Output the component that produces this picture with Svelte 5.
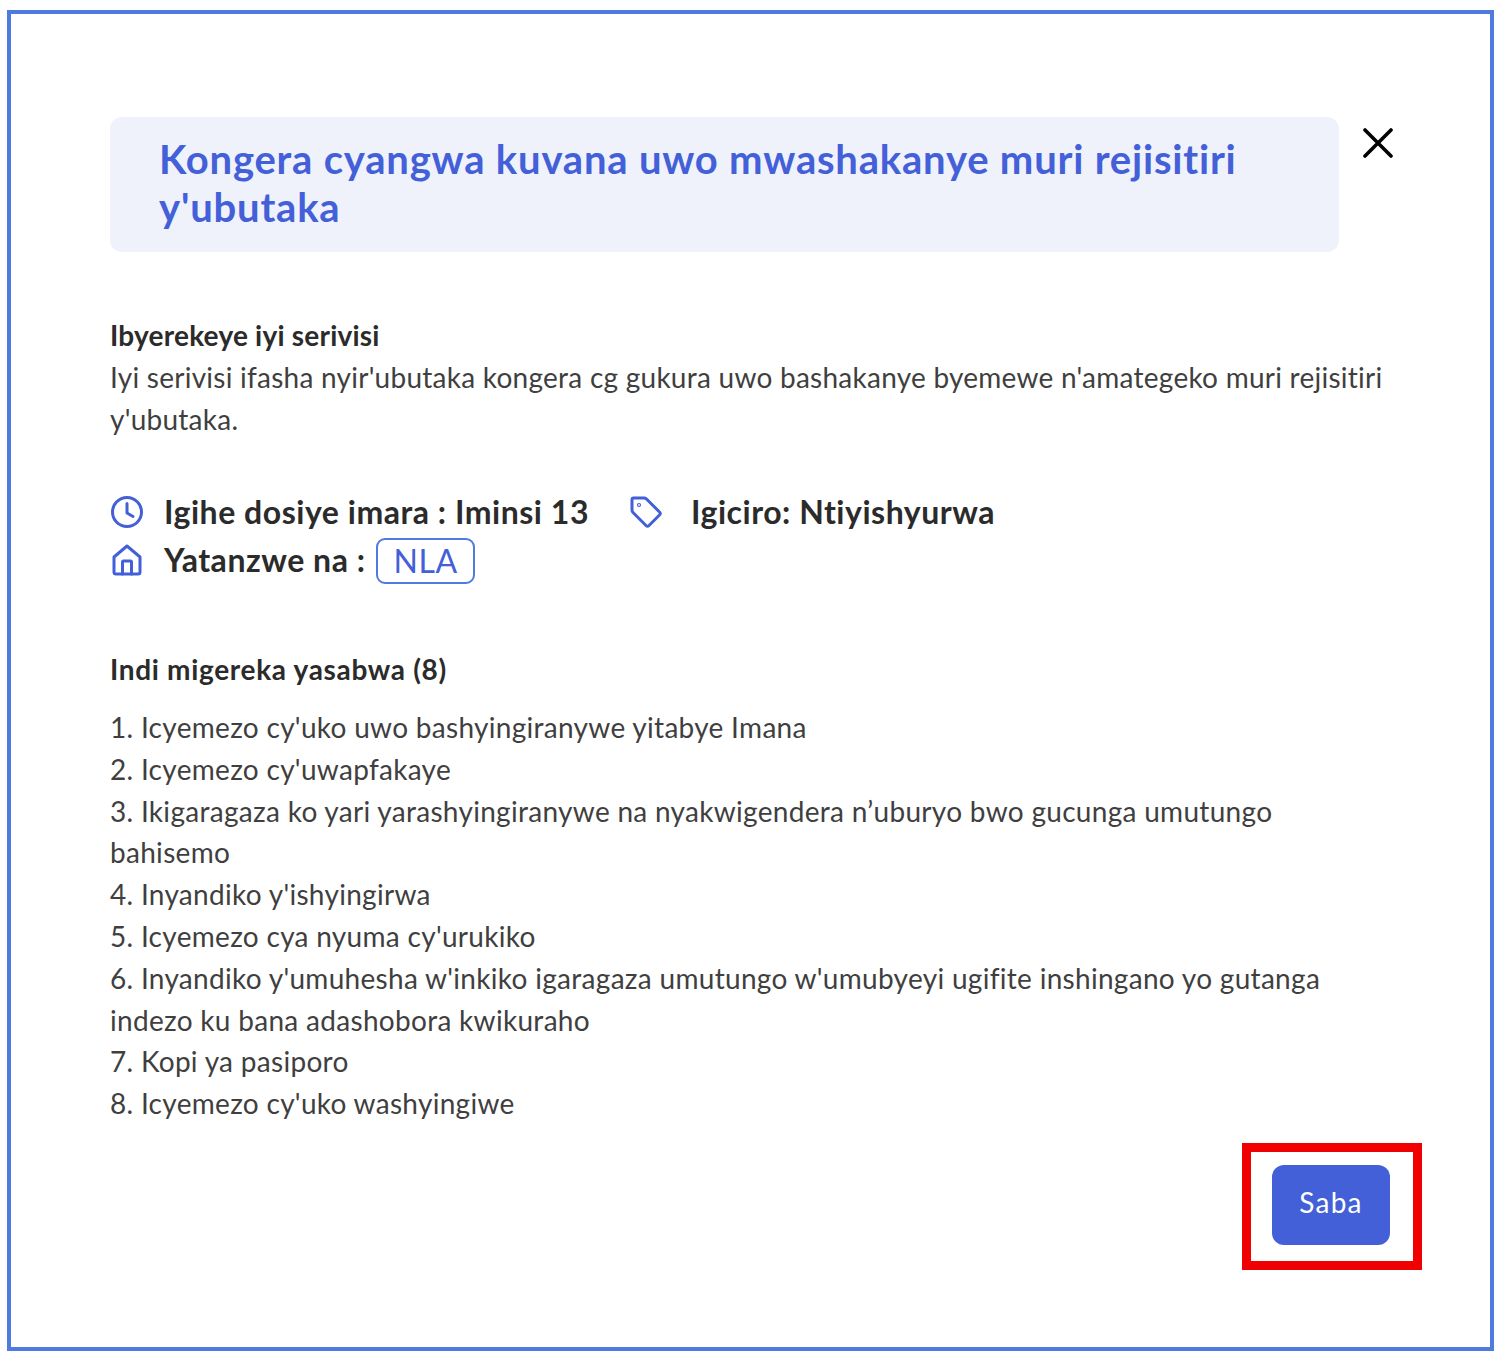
<script>
	const requirements = [
		"1. Icyemezo cy'uko uwo bashyingiranywe yitabye Imana",
		"2. Icyemezo cy'uwapfakaye",
		"3. Ikigaragaza ko yari yarashyingiranywe na nyakwigendera n’uburyo bwo gucunga umutungo bahisemo",
		"4. Inyandiko y'ishyingirwa",
		"5. Icyemezo cya nyuma cy'urukiko",
		"6. Inyandiko y'umuhesha w'inkiko igaragaza umutungo w'umubyeyi ugifite inshingano yo gutanga indezo ku bana adashobora kwikuraho",
		"7. Kopi ya pasiporo",
		"8. Icyemezo cy'uko washyingiwe"
	];
</script>

<div class="frame">
	<header class="top">
		<h1>Kongera cyangwa kuvana uwo mwashakanye muri rejisitiri y'ubutaka</h1>
		<button class="close" aria-label="Close">
			<svg width="30" height="30" viewBox="0 0 30 30" fill="none" stroke="#000" stroke-width="3.6" stroke-linecap="round">
				<path d="M2 2 L28 28 M28 2 L2 28" />
			</svg>
		</button>
	</header>

	<section class="about">
		<h2>Ibyerekeye iyi serivisi</h2>
		<p>Iyi serivisi ifasha nyir'ubutaka kongera cg gukura uwo bashakanye byemewe n'amategeko muri rejisitiri y'ubutaka.</p>
	</section>

	<section class="meta">
		<div class="meta-row">
			<span class="meta-item">
				<svg class="icon" width="34" height="34" viewBox="0 0 34 34" fill="none" stroke="#4360d8" stroke-width="3" stroke-linecap="round" stroke-linejoin="round">
					<circle cx="17" cy="17" r="14.5" />
					<path d="M17 8.5 V18 L23 21.5" />
				</svg>
				<span>Igihe dosiye imara : Iminsi 13</span>
			</span>
			<span class="meta-item price">
				<svg class="icon" width="34" height="34" viewBox="0 0 34 34" fill="none" stroke="#4360d8" stroke-width="3" stroke-linecap="round" stroke-linejoin="round">
					<path d="M3 4.5 Q3 3 4.5 3 H15 Q16.5 3 17.5 4 L30.5 17 Q32 18.5 30.5 20 L20 30.5 Q18.5 32 17 30.5 L4 17.5 Q3 16.5 3 15 Z" />
					<circle cx="10" cy="10" r="0.6" />
				</svg>
				<span>Igiciro: Ntiyishyurwa</span>
			</span>
		</div>
		<div class="meta-row">
			<span class="meta-item">
				<svg class="icon" width="34" height="34" viewBox="0 0 34 34" fill="none" stroke="#4360d8" stroke-width="3" stroke-linecap="round" stroke-linejoin="round">
					<path d="M4 14 L17 3 L30 14 V29 Q30 31 28 31 H6 Q4 31 4 29 Z" />
					<path d="M12.5 31 V19 Q12.5 18 13.5 18 H20.5 Q21.5 18 21.5 19 V31" />
				</svg>
				<span>Yatanzwe na :</span>
			</span>
			<span class="badge">NLA</span>
		</div>
	</section>

	<section class="requirements">
		<h2>Indi migereka yasabwa (8)</h2>
		<div class="list">
			{#each requirements as item}
				<div>{item}</div>
			{/each}
		</div>
	</section>

	<div class="actions">
		<div class="highlight">
			<button class="submit">Saba</button>
		</div>
	</div>
</div>

<style>
	:global(body) {
		margin: 0;
		background: #fff;
		font-family: "Lato", "Noto Sans", sans-serif;
	}

	.frame {
		box-sizing: border-box;
		width: 1487px;
		height: 1341px;
		margin: 10px 0 0 7px;
		padding: 103px 101px 0 99px;
		border: 4px solid #4f7be0;
		color: #3f3f3f;
	}

	.top {
		display: flex;
		align-items: flex-start;
	}

	h1 {
		box-sizing: border-box;
		flex-shrink: 0;
		width: 1229px;
		height: 135px;
		margin: 0;
		padding: 18px 49px;
		background: #eff2fb;
		border-radius: 12px;
		color: #4360d8;
		font-size: 40px;
		line-height: 48px;
		font-weight: 700;
		letter-spacing: 0.8px;
	}

	.close {
		flex-shrink: 0;
		margin: 11px 0 0 24px;
		padding: 0;
		border: none;
		background: none;
		line-height: 0;
	}

	.about {
		margin-top: 62px;
	}

	h2 {
		margin: 0;
		color: #2b2b2b;
		font-size: 28px;
		line-height: 42px;
		font-weight: 700;
		letter-spacing: 0.22px;
	}

	p {
		margin: 0;
		font-size: 28px;
		line-height: 42px;
		letter-spacing: 0.25px;
	}

	.meta {
		margin-top: 48px;
		color: #2b2b2b;
		font-size: 32px;
		line-height: 48px;
		font-weight: 700;
		letter-spacing: 0.53px;
	}

	.meta-row {
		display: flex;
		align-items: center;
	}

	.meta-item {
		display: flex;
		align-items: center;
		gap: 20px;
	}

	.price {
		margin-left: 40px;
		gap: 28px;
	}

	.badge {
		box-sizing: border-box;
		height: 46px;
		margin: 1px 0 0 11px;
		padding: 0 15px;
		border: 2px solid #4f7be0;
		border-radius: 9px;
		color: #4360d8;
		font-weight: 400;
		line-height: 42px;
	}

	.requirements {
		margin-top: 64px;
	}

	.requirements h2 {
		letter-spacing: 0.68px;
	}

	.list {
		margin-top: 17px;
		font-size: 28px;
		line-height: 41.8px;
		letter-spacing: 0.3px;
	}

	.actions {
		display: flex;
		justify-content: flex-end;
		margin: 18px -33px 0 0;
	}

	.highlight {
		box-sizing: border-box;
		width: 180px;
		height: 127px;
		padding: 13px 23px 0 21px;
		border: 9px solid #f00000;
	}

	.submit {
		width: 118px;
		height: 80px;
		padding: 0 0 6px;
		border: none;
		border-radius: 12px;
		background: #4360d8;
		color: #fff;
		font-family: inherit;
		font-size: 28px;
		letter-spacing: 1.2px;
	}
</style>
